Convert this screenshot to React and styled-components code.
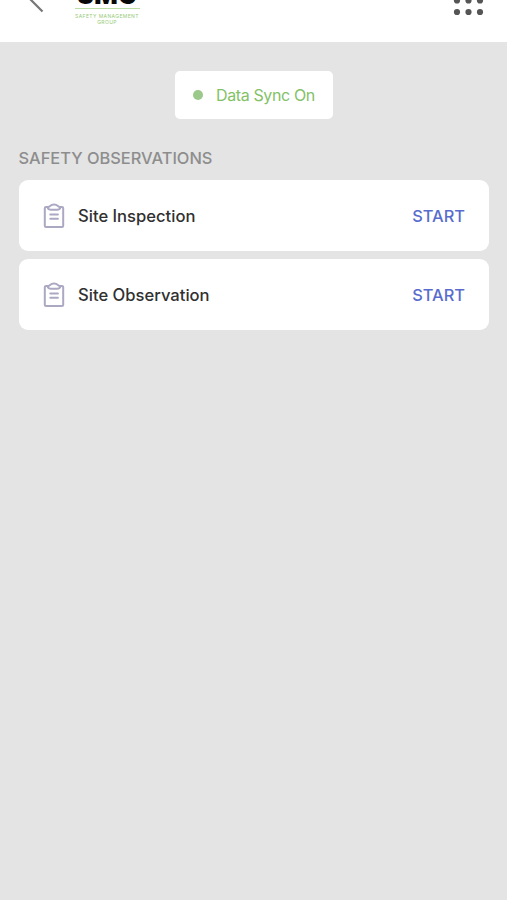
import React from 'react'
import styled, {createGlobalStyle} from 'styled-components'

const GlobalStyle = createGlobalStyle`
  body {
    margin: 0;
    background-color: #e4e4e4;
    font-family: Inter, 'Liberation Sans', sans-serif;
  }
`

const Screen = styled.div`
  min-height: 100vh;
  background-color: #e4e4e4;
`

const Header = styled.header`
  display: flex;
  align-items: flex-end;
  height: 42px;
  padding: 0 22px 0 27px;
  box-sizing: border-box;
  overflow: hidden;
  background-color: white;
`

const BackIcon = styled.svg`
  width: 18px;
  height: 28px;
  margin-bottom: 29px;
  flex: none;
`

const Logo = styled.div`
  display: flex;
  flex-direction: column;
  align-items: center;
  width: 66px;
  margin: 0 auto 17px 29px;
`

const LogoName = styled.div`
  height: 22px;
  font-size: 24.5px;
  line-height: 22px;
  font-weight: 900;
  letter-spacing: 0.6px;
  margin-right: -0.6px;
  color: #080808;
`

const LogoRule = styled.div`
  width: 65px;
  height: 1px;
  margin: 2px 0 4px;
  background-color: #b9dda3;
`

const LogoTagline = styled.div`
  font-size: 5px;
  line-height: 6px;
  letter-spacing: 0.4px;
  text-align: center;
  white-space: nowrap;
  color: #96cb78;
`

const MenuIcon = styled.svg`
  width: 32px;
  height: 32px;
  margin-bottom: 26px;
  flex: none;
`

const Content = styled.main`
  display: flex;
  flex-direction: column;
  padding: 29px 18px 0 18.5px;
`

const SyncStatus = styled.div`
  display: flex;
  align-items: center;
  align-self: center;
  width: 158.5px;
  height: 48px;
  padding-left: 18.5px;
  box-sizing: border-box;
  border-radius: 5px;
  background-color: white;
  color: #83c167;
  font-size: 16px;
  letter-spacing: -0.37px;
  white-space: nowrap;
`

const SyncDot = styled.span`
  width: 10px;
  height: 10px;
  margin-right: 13px;
  border-radius: 50%;
  background-color: #9bc88b;
`

const SectionTitle = styled.h2`
  margin: 29px 0 12px;
  font-size: 16.4px;
  line-height: 20px;
  font-weight: 500;
  color: #8d8d8d;
`

const FormList = styled.div`
  display: flex;
  flex-direction: column;
  gap: 8px;
`

const FormRow = styled.div`
  display: flex;
  align-items: center;
  height: 71px;
  padding: 0 24px 0 23.5px;
  box-sizing: border-box;
  border-radius: 9px;
  background-color: white;
`

const ClipboardIcon = styled.svg`
  width: 24px;
  height: 26px;
  margin-right: 12px;
  fill: none;
  stroke: #aaa8c2;
  stroke-width: 2;
  stroke-linecap: round;
  stroke-linejoin: round;
`

const FormName = styled.span`
  flex: 1;
  font-size: 16.6px;
  font-weight: 500;
  color: #303030;
`

const StartButton = styled.button`
  padding: 0;
  border: 0;
  background: none;
  font-family: inherit;
  font-size: 16.4px;
  font-weight: 500;
  color: #596ccd;
`

const forms = ['Site Inspection', 'Site Observation']

function Clipboard() {
  return (
    <ClipboardIcon viewBox='0 0 24 26'>
      <rect x='2.8' y='4' width='18.4' height='20' rx='1.3' />
      <path d='M5.5 4.2C7.8 4.2 8 1.600 12 1.600S16.200 4.200 18.500 4.200C18 6 16.800 6.800 15 6.800H9C7.200 6.800 6 6 5.500 4.200Z' fill='white' />
      <path d='M8.300 11.600h7.600M8.300 15.800h7.600' />
    </ClipboardIcon>
  )
}

export default function App() {
  return (
    <Screen>
      <GlobalStyle />
      <Header>
        <BackIcon viewBox='0 0 18 28'>
          <path d='M15.500 1L2.500 14L15.500 27' fill='none' stroke='#777' strokeWidth='2.200' transform='translate(0 -0.5)' />
        </BackIcon>
        <Logo>
          <LogoName>SMG</LogoName>
          <LogoRule />
          <LogoTagline>SAFETY MANAGEMENT<br />GROUP</LogoTagline>
        </Logo>
        <MenuIcon viewBox='0 0 32 32' fill='#555'>
          {[4.5, 16.5, 28].map(y => [4, 15.5, 27].map(x => (
            <circle key={`${x}-${y}`} cx={x} cy={y} r='3.1' />
          )))}
        </MenuIcon>
      </Header>
      <Content>
        <SyncStatus>
          <SyncDot />
          Data Sync On
        </SyncStatus>
        <SectionTitle>SAFETY OBSERVATIONS</SectionTitle>
        <FormList>
          {forms.map(name => (
            <FormRow key={name}>
              <Clipboard />
              <FormName>{name}</FormName>
              <StartButton>START</StartButton>
            </FormRow>
          ))}
        </FormList>
      </Content>
    </Screen>
  )
}
